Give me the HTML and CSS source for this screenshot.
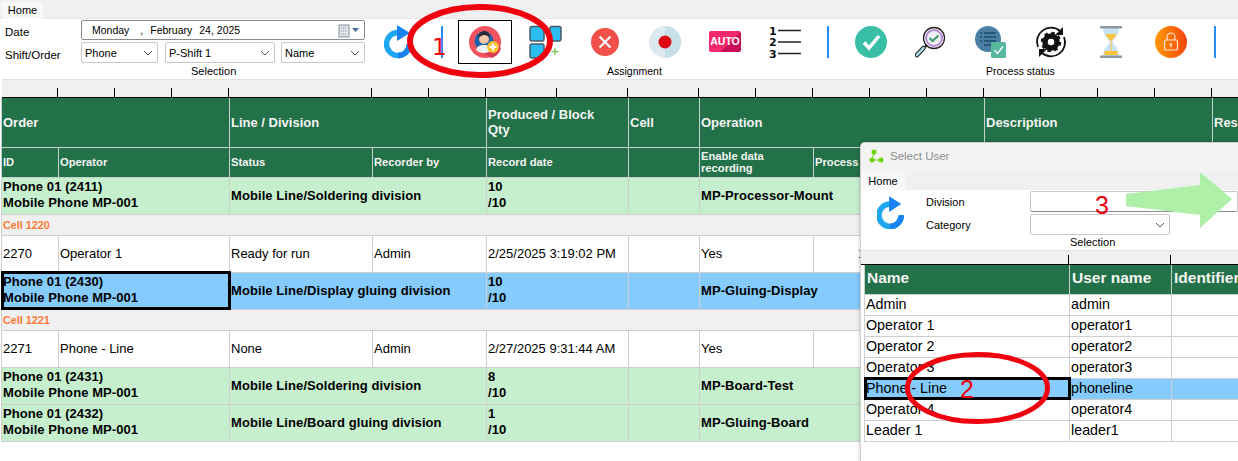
FILE: index.html
```html
<!DOCTYPE html>
<html lang="en">
<head>
<meta charset="utf-8">
<title>Home</title>
<link rel="stylesheet" href="styles.css">
</head>
<body>
<div class="tabs"><span class="tab">Home</span></div>
<header class="ribbon">
  <section class="group sel-group">
    <div class="sel-grid">
      <span class="lbl">Date</span>
      <div class="datebox"><span>Monday</span><span class="d-comma">,</span><span>February</span><span class="d-day">24, 2025</span>
        <svg class="calicon" width="24" height="14" viewBox="0 0 24 14"><rect x="1" y="1" width="10" height="12" fill="#dfe3ea" stroke="#8a93a0"/><path d="M3 4h6M3 7h6M3 10h6" stroke="#8a93a0" stroke-dasharray="1 1"/><path d="M14 4h7l-3.500 4z" fill="#4c6a92"/></svg>
      </div>
      <span class="lbl">Shift/Order</span>
      <div class="combos">
        <div class="combo c1">Phone<svg class="chev" width="10" height="6" viewBox="0 0 10 6"><path d="M1 1l4 4 4-4" fill="none" stroke="#555"/></svg></div>
        <div class="combo c2">P-Shift 1<svg class="chev" width="10" height="6" viewBox="0 0 10 6"><path d="M1 1l4 4 4-4" fill="none" stroke="#555"/></svg></div>
        <div class="combo c3">Name<svg class="chev" width="10" height="6" viewBox="0 0 10 6"><path d="M1 1l4 4 4-4" fill="none" stroke="#555"/></svg></div>
      </div>
    </div>
    <div class="cap cap-sel">Selection</div>
  </section>
  <section class="group asg-group">
    <div class="icons">
      <svg class="ic i-refresh" width="30" height="34" viewBox="0 0 30 34"><path d="M14 7.500A11.500 11.500 0 1 0 25.500 19" fill="none" stroke="#1ea7f0" stroke-width="5.500"/><path d="M25.500 19A11.500 11.500 0 0 1 14 30.500" fill="none" stroke="#1a82f0" stroke-width="5.500"/><path d="M13 0l13 8-13 8z" fill="#1a82f0"/></svg>
      <i class="vsep sep1"></i>
      <div class="pick"><svg width="32" height="32" viewBox="0 0 32 32"><circle cx="16" cy="16" r="16" fill="#f2545f"/><path d="M10 24l12 8c5-1 9-5 10-10L22 12z" fill="#d93a55"/><circle cx="15" cy="15" r="9.500" fill="#1e63a8"/><path d="M7 24c1-4 4-5 8-5s7 1 8 5c-2 2-5 3-8 3s-6-1-8-3z" fill="#eef3f8"/><circle cx="15" cy="13" r="5" fill="#f6c6a8"/><path d="M9.500 13c-1-6 3-8 6-8s6 2 5 8c-1-3-3-4-5-4s-5 1-6 4z" fill="#2a2a3a"/><circle cx="24" cy="21" r="6" fill="#fdc02f"/><path d="M24 17.500v7M20.500 21h7" stroke="#fff" stroke-width="2.200"/></svg></div>
      <svg class="ic i-squares" width="34" height="34" viewBox="0 0 34 34"><g fill="#29bdf2" stroke="#4d5a66" stroke-width="1.500"><rect x="1" y="1.500" width="14" height="14.500" rx="2"/><rect x="21" y="1.500" width="11" height="14.500" rx="2"/><rect x="1" y="19" width="14" height="14" rx="2"/></g><path d="M26 23v7M22.500 26.500h7" stroke="#72c257" stroke-width="1.300"/></svg>
      <svg class="ic i-x" width="28" height="28" viewBox="0 0 28 28"><circle cx="14" cy="14" r="14" fill="#f4504a"/><path d="M8.500 8.500l11 11M19.500 8.500l-11 11" stroke="#fff" stroke-width="2.200"/></svg>
      <svg class="ic i-rec" width="32" height="32" viewBox="0 0 32 32"><circle cx="16" cy="16" r="16" fill="#dceaf0"/><path d="M16 0a16 16 0 0 1 0 32z" fill="#c7e0e7"/><circle cx="16" cy="16" r="6.500" fill="#dd0a13"/></svg>
      <div class="auto">AUTO</div>
      <svg class="ic i-list" width="32" height="36" viewBox="0 0 32 36"><path d="M9 4.500h23M9 16h23M9 27.500h23" stroke="#222" stroke-width="1.700"/><g class="listnum"><text x="0" y="8.500">1</text><text x="0" y="20">2</text><text x="0" y="31.500">3</text></g></svg>
      <i class="vsep sep2"></i>
    </div>
    <div class="cap cap-asg">Assignment</div>
  </section>
  <section class="group proc-group">
    <div class="icons">
      <svg class="ic i-ok" width="32" height="32" viewBox="0 0 32 32"><circle cx="16" cy="16" r="16" fill="#38bfa6"/><path d="M9 16.500l5 5.500 10-12" fill="none" stroke="#fff" stroke-width="3.500"/></svg>
      <svg class="ic i-mag" width="32" height="32" viewBox="0 0 32 32"><circle cx="19" cy="12" r="10.500" fill="#fff" stroke="#222" stroke-width="1.300"/><circle cx="19" cy="12" r="8" fill="#f2eef5" stroke="#b48ad0" stroke-width="2"/><path d="M14.500 12l3 3 6-5.500" fill="none" stroke="#3c9b6a" stroke-width="2"/><path d="M12 19l-3 3" stroke="#222" stroke-width="2"/><path d="M8.500 22L2 29" stroke="#222" stroke-width="4.500" stroke-linecap="round"/><path d="M8.500 22L2 29" stroke="#a7e3ee" stroke-width="2.500" stroke-linecap="round"/></svg>
      <svg class="ic i-doc" width="32" height="32" viewBox="0 0 32 32"><circle cx="13" cy="13" r="13" fill="#4a7fa3"/><path d="M9 7h12M9 11h12M9 15h12M9 19h10" stroke="#27577a" stroke-width="2"/><path d="M5 7h2M5 11h2M5 15h2" stroke="#27577a" stroke-width="2"/><rect x="16" y="16" width="15" height="16" rx="1.500" fill="#57b89b"/><path d="M19.500 24l3 3.500 5.500-7" fill="none" stroke="#fff" stroke-width="1.300"/></svg>
      <svg class="ic i-gear" width="32" height="32" viewBox="0 0 32 32"><path d="M3 21A14 14 0 0 1 25 5M29 11a14 14 0 0 1-22 16" fill="none" stroke="#111" stroke-width="1.800"/><path d="M28 1v8h-8zM4 31v-8h8z" fill="#111"/><circle cx="16" cy="16" r="6" fill="none" stroke="#111" stroke-width="5.500"/><circle cx="16" cy="16" r="9" fill="none" stroke="#111" stroke-width="2.500" stroke-dasharray="3.500 3.570"/></svg>
      <svg class="ic i-glass" width="22" height="32" viewBox="0 0 22 32"><path d="M3 2h16c0 8-5 10-6.500 14 1.500 4 6.500 6 6.500 14H3c0-8 5-10 6.500-14C8 12 3 10 3 2z" fill="#c9e3f2"/><path d="M5.500 8h11c-1 3-4 5-5.500 7.500C9.500 13 6.500 11 5.500 8z" fill="#f9c33c"/><path d="M4.500 25h13v4h-13z" fill="#f9c33c"/><path d="M10.500 16h1v9h-1z" fill="#f9c33c"/><rect x="0" y="0" width="22" height="2.500" fill="#8d9aa3"/><rect x="0" y="29.500" width="22" height="2.500" fill="#8d9aa3"/></svg>
      <svg class="ic i-lock" width="32" height="32" viewBox="0 0 32 32"><defs><linearGradient id="lockgrad" x1="0" x2="1" y1="0" y2="0"><stop offset="0" stop-color="#ff9a05"/><stop offset="1" stop-color="#f4450e"/></linearGradient></defs><circle cx="16" cy="16" r="16" fill="url(#lockgrad)"/><rect x="9.500" y="14" width="13" height="10" rx="2" fill="none" stroke="#ffe4cf" stroke-width="1.200"/><path d="M12 14v-3a4 4 0 0 1 8 0v3" fill="none" stroke="#ffe4cf" stroke-width="1.200"/><circle cx="16" cy="18.500" r="1.300" fill="#ffe4cf"/><path d="M16 19v2.500" stroke="#ffe4cf"/></svg>
      <i class="vsep sep3"></i>
    </div>
    <div class="cap cap-proc">Process status</div>
  </section>
</header>
<div class="ruler">
  <i class="t57"></i><i class="t57"></i><i class="t57"></i><i class="t57"></i><i class="t143"></i><i class="t57"></i><i class="t57"></i><i class="t71"></i><i class="t71"></i><i class="t71"></i><i class="t57"></i><i class="t57"></i><i class="t57"></i><i class="t57"></i><i class="t57"></i><i class="t57"></i><i class="t57"></i><i class="t57"></i><i class="t57"></i>
</div>
<table class="grid">
  <colgroup><col class="w-id"><col class="w-op"><col class="w-st"><col class="w-rec"><col class="w-date"><col class="w-cell"><col class="w-en"><col class="w-proc"><col class="w-desc"><col class="w-res"></colgroup>
  <thead>
    <tr class="h1">
      <th colspan="2">Order</th><th colspan="2">Line / Division</th><th>Produced / Block<br>Qty</th><th>Cell</th><th colspan="2">Operation</th><th>Description</th><th>Res</th>
    </tr>
    <tr class="h2">
      <th>ID</th><th>Operator</th><th>Status</th><th>Recorder by</th><th>Record date</th><th></th><th>Enable data<br>recording</th><th>Process</th><th></th><th></th>
    </tr>
  </thead>
  <tbody>
    <tr class="order green"><td colspan="2">Phone 01 (2411)<br>Mobile Phone MP-001</td><td colspan="2">Mobile Line/Soldering division</td><td>10<br>/10</td><td></td><td colspan="2">MP-Processor-Mount</td><td></td><td></td></tr>
    <tr class="cellrow"><td colspan="10">Cell 1220</td></tr>
    <tr class="plain"><td>2270</td><td>Operator 1</td><td>Ready for run</td><td>Admin</td><td>2/25/2025 3:19:02 PM</td><td></td><td>Yes</td><td class="procnum">1</td><td></td><td></td></tr>
    <tr class="order blue"><td colspan="2" class="current">Phone 01 (2430)<br>Mobile Phone MP-001</td><td colspan="2">Mobile Line/Display gluing division</td><td>10<br>/10</td><td></td><td colspan="2">MP-Gluing-Display</td><td></td><td></td></tr>
    <tr class="cellrow"><td colspan="10">Cell 1221</td></tr>
    <tr class="plain"><td>2271</td><td>Phone - Line</td><td>None</td><td>Admin</td><td>2/27/2025 9:31:44 AM</td><td></td><td>Yes</td><td></td><td></td><td></td></tr>
    <tr class="order green"><td colspan="2">Phone 01 (2431)<br>Mobile Phone MP-001</td><td colspan="2">Mobile Line/Soldering division</td><td>8<br>/10</td><td></td><td colspan="2">MP-Board-Test</td><td></td><td></td></tr>
    <tr class="order green"><td colspan="2">Phone 01 (2432)<br>Mobile Phone MP-001</td><td colspan="2">Mobile Line/Board gluing division</td><td>1<br>/10</td><td></td><td colspan="2">MP-Gluing-Board</td><td></td><td></td></tr>
  </tbody>
</table>

<div class="dialog">
  <div class="titlebar"><svg width="16" height="14" viewBox="0 0 16 14"><g fill="#6fd40c"><circle cx="5" cy="3" r="2.500"/><circle cx="3" cy="11" r="2.500"/><circle cx="12" cy="11" r="2.500"/></g><path d="M5 3L3 11h9" fill="none" stroke="#6fd40c"/></svg><span>Select User</span></div>
  <div class="d-tabs"><span class="d-tab">Home</span></div>
  <div class="d-ribbon">
    <svg class="d-refresh" width="28" height="33" viewBox="0 0 30 35"><path d="M14 8.500A12 12 0 1 0 26 20.500" fill="none" stroke="#1ea7f0" stroke-width="6"/><path d="M26 20.500A12 12 0 0 1 14 32.500" fill="none" stroke="#1a82f0" stroke-width="6"/><path d="M13 0l13 8.500-13 8.500z" fill="#1a82f0"/></svg>
    <div class="d-form">
      <span class="lbl">Division</span><div class="d-field wide"></div>
      <span class="lbl">Category</span><div class="d-field">
        <svg class="chev" width="10" height="6" viewBox="0 0 10 6"><path d="M1 1l4 4 4-4" fill="none" stroke="#555"/></svg></div>
      <div class="d-cap">Selection</div>
    </div>
  </div>
  <div class="d-ruler"><i class="r204"></i><i class="r102"></i></div>
  <table class="ugrid">
    <colgroup><col class="u1"><col class="u2"><col class="u3"></colgroup>
    <thead><tr><th>Name</th><th>User name</th><th>Identifier</th></tr></thead>
    <tbody>
      <tr><td>Admin</td><td>admin</td><td></td></tr>
      <tr><td>Operator 1</td><td>operator1</td><td></td></tr>
      <tr><td>Operator 2</td><td>operator2</td><td></td></tr>
      <tr><td>Operator 3</td><td>operator3</td><td></td></tr>
      <tr class="blue"><td class="current">Phone - Line</td><td>phoneline</td><td></td></tr>
      <tr><td>Operator 4</td><td>operator4</td><td></td></tr>
      <tr><td>Leader 1</td><td>leader1</td><td></td></tr>
    </tbody>
  </table>
</div>

<svg class="mark m-ell1" width="146" height="74" viewBox="0 0 146 74"><ellipse cx="73" cy="37" rx="70" ry="34" fill="none" stroke="#f0000f" stroke-width="6"/></svg>
<svg class="mark m-ell2" width="145" height="72" viewBox="0 0 145 72"><ellipse cx="72.500" cy="36" rx="70" ry="33.500" fill="none" stroke="#f0000f" stroke-width="5"/></svg>
<svg class="mark m-arrow" width="106" height="56" viewBox="0 0 106 56"><path d="M0 22L74 13V0L106 27 74 56V43L0 34z" fill="#aff0a8"/></svg>
<span class="mark digit n1">1</span>
<span class="mark digit n2">2</span>
<span class="mark digit n3">3</span>
</body>
</html>
```
FILE: styles.css
```css
* { box-sizing: border-box; }
html, body { margin: 0; padding: 0; }
body {
  position: relative;
  width: 1238px;
  height: 461px;
  overflow: hidden;
  background: #fff;
  color: #000;
  font: 11px "Liberation Sans", Arial, sans-serif;
}
.tabs { height: 19px; background: #f0f0f0; padding: 2px 0 0 2px; border-bottom: 1px solid #e4e4e4; }
.tab { display: block; width: 41px; height: 17px; background: #f8f8f8; text-align: center; line-height: 16px; font-size: 11px; }

.ribbon { display: flex; height: 60px; background: #fff; margin-left: 2px; }
.group { position: relative; }
.sel-group { width: 378px; }
.asg-group { width: 640px; }
.proc-group { flex: 1; margin-left: -1px; }
.cap { position: absolute; top: 45px; font-size: 10.500px; line-height: 14px; }
.cap-sel { left: 189px; font-size: 11px; }
.cap-asg { left: 227px; }
.cap-proc { left: -33px; }

.sel-grid { display: grid; grid-template-columns: 76px 284px; grid-template-rows: 20px 21px; row-gap: 2px; padding: 1px 0 0 3px; }
.lbl { font-size: 11.500px; line-height: 21px; }
.sel-grid .lbl { margin-top: 2px; }
.sel-grid .lbl:nth-child(3) { margin-top: 3px; }
.datebox { display: flex; align-items: center; height: 20px; border: 1px solid #8c8c8c; border-radius: 2px; font-size: 10.500px; padding-left: 10px; position: relative; }
.d-comma { margin: 0 7px 0 11px; }
.datebox span:nth-child(3) { width: 49px; }
.calicon { position: absolute; right: 2px; top: 3px; }
.combos { display: flex; }
.combo { position: relative; height: 21px; border: 1px solid #c8c8c8; border-radius: 2px; font-size: 11px; line-height: 21px; padding-left: 3px; }
.c1 { width: 77px; margin-right: 7px; }
.c2 { width: 110px; margin-right: 6px; }
.c3 { width: 84px; }
.chev { position: absolute; right: 4px; top: 7px; }

.icons { position: relative; height: 46px; display: flex; }
.ic, .vsep, .pick, .auto { position: absolute; }
.vsep { top: 7px; width: 2px; height: 32px; background: #2a8cf5; }
.i-refresh { left: 4px; top: 6px; }
.sep1 { left: 61px; }
.pick { left: 78px; top: 1px; width: 54px; height: 44px; border: 1px solid #000; display: flex; align-items: center; justify-content: center; }
.i-squares { left: 149px; top: 6px; }
.i-x { left: 211px; top: 9px; }
.i-rec { left: 269px; top: 7px; }
.auto { left: 329px; top: 12px; width: 32px; height: 21px; background: linear-gradient(135deg, #f5286e 62%, #c80f58 62%); color: #fff; font-weight: bold; font-size: 10.500px; line-height: 21px; text-align: center; border-radius: 2px; }
.i-list { left: 389px; top: 7px; }
.listnum { font: bold 11px "DejaVu Sans", sans-serif; fill: #111; }
.sep2 { left: 447px; }
.proc-group .i-ok { left: -164px; top: 7px; }
.proc-group .i-mag { left: -104px; top: 7px; }
.proc-group .i-doc { left: -44px; top: 7px; }
.proc-group .i-gear { left: 16px; top: 7px; }
.proc-group .i-glass { left: 81px; top: 7px; }
.proc-group .i-lock { left: 136px; top: 7px; }
.proc-group .sep3 { left: 195px; }

.ruler { display: flex; height: 19px; background: #f0f0f0; border-top: 1px solid #e2e2e2; border-bottom: 1px solid #000; padding: 8px 0 0 0; margin-left: 2px; }
.ruler i { display: block; flex: none; height: 9px; border-right: 1px solid #000; }
.t57 { width: 57px; }
.t143 { width: 143px; }
.t71 { width: 71px; }
.ruler i:first-child { width: 56px; }

.grid { table-layout: fixed; width: 1237px; margin-left: 1px; border-collapse: collapse; font-size: 13px; }
.w-id { width: 57px; } .w-op { width: 171px; } .w-st { width: 143px; } .w-rec { width: 114px; } .w-date { width: 142px; } .w-cell { width: 71px; } .w-en { width: 114px; } .w-proc { width: 171px; } .w-desc { width: 228px; } .w-res { width: 26px; }
.grid th, .grid td { border: 1px solid #cfcfcf; padding: 0 1px; overflow: hidden; white-space: nowrap; }
.grid th { background: #237148; color: #f4f4f4; text-align: left; font-weight: bold; border-color: #c8d0cb; }
.grid .h1 th { height: 49px; font-size: 13px; line-height: 15px; border-top: none; }
.grid .h2 th { height: 30px; font-size: 11.200px; line-height: 12px; }
.grid .order td { height: 37px; font-weight: bold; line-height: 16px; letter-spacing: .08px; }
.grid .order td:first-child, .grid .order td:nth-child(3) { padding-bottom: 2px; }
.green td { background: #c6efce; }
.blue td { background: #85cbfb; }
.grid .cellrow td { height: 21px; background: #f0f0f0; color: #ff7a33; font-size: 10.800px; font-weight: bold; }
.plain td { height: 37px; background: #fff; }
.grid td.procnum { padding-left: 44px; }
td.current { position: relative; outline: 3px solid #000; outline-offset: -2px; }

.dialog { position: absolute; left: 860px; top: 142px; width: 378px; height: 319px; overflow: hidden; background: #fff; border: 1px solid #cfcfcf; border-width: 1px 0 0 1px; border-radius: 5px 0 0 0; box-shadow: 0 0 4px rgba(0,0,0,.25); }
.titlebar { height: 29px; background: #f3f3f3; display: flex; align-items: center; gap: 5px; padding: 0 0 3px 8px; color: #8d8d8d; font-size: 11.500px; }
.d-tabs { height: 18px; background: #f0f0f0; }
.d-tab { display: block; width: 44px; height: 18px; background: #f8f8f8; text-align: center; line-height: 19px; font-size: 11px; }
.d-ribbon { position: relative; display: flex; height: 60px; background: #fff; padding-left: 16px; }
.d-refresh { margin-top: 6px; }
.d-form { position: absolute; left: 65px; top: 1px; display: grid; grid-template-columns: 104px 140px; grid-template-rows: 21px 21px; row-gap: 2px; }
.d-form .lbl { font-size: 11px; line-height: 23px; }
.d-field { position: relative; height: 21px; border: 1px solid #c8c8c8; border-radius: 2px; }
.d-field.wide { width: 208px; border-bottom-color: #8c8c8c; }
.d-cap { grid-column: 1 / 3; margin-top: -1px; padding-left: 144px; font-size: 11px; line-height: 13px; }
.d-ruler { display: flex; height: 15px; background: #f0f0f0; border-top: 1px solid #e2e2e2; border-bottom: 1px solid #000; padding: 4px 0 0 4px; }
.d-ruler i { display: block; flex: none; height: 10px; border-right: 1px solid #000; }
.r204 { width: 204px; }
.r102 { width: 102px; }
.ugrid { table-layout: fixed; width: 374px; margin-left: 3px; border-collapse: collapse; font-size: 14.300px; }
.u1 { width: 205px; } .u2 { width: 102px; } .u3 { width: 67px; }
.ugrid th { height: 29px; background: #237148; color: #f4f4f4; text-align: left; font-size: 15.500px; padding: 0 2px 2px; border: 1px solid #c8d0cb; border-top: none; overflow: hidden; white-space: nowrap; }
.ugrid td { height: 21px; padding: 0 1px 2px; border: 1px solid #cfcfcf; }

.mark { position: absolute; }
.m-ell1 { left: 407px; top: 4px; }
.m-ell2 { left: 905px; top: 352px; }
.m-arrow { left: 1126px; top: 172px; }
.digit { color: #f0000f; font-size: 25px; }
.n1 { left: 432px; top: 32px; font: 23px/30px "DejaVu Sans", sans-serif; }
.n2 { left: 960px; top: 376px; line-height: 26px; }
.n3 { left: 1095px; top: 191px; line-height: 28px; }
```
